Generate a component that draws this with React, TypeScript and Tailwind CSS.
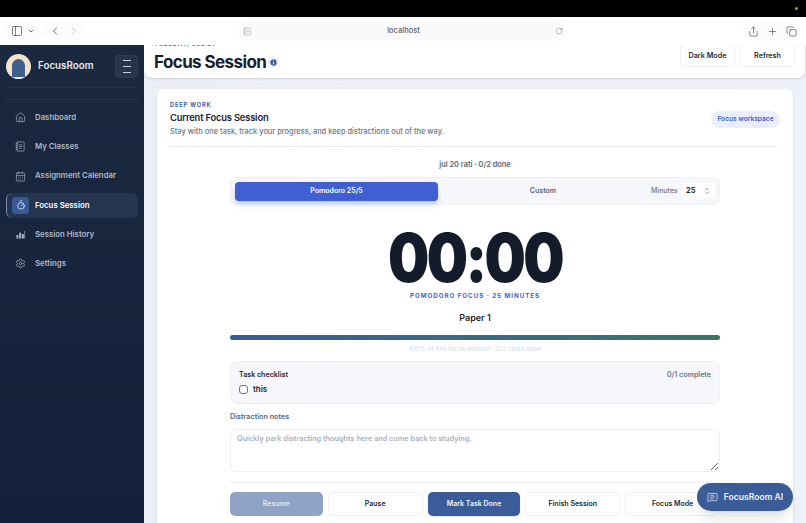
import {
  CalendarDays,
  ChevronDown,
  ChevronLeft,
  ChevronRight,
  ChevronsUpDown,
  Copy,
  House,
  Info,
  MessageSquareText,
  NotebookText,
  PanelLeft,
  Plus,
  RotateCw,
  Settings,
  Share,
  Timer,
} from 'lucide-react';

function HistoryIcon({ size, className }: { size: number; className?: string }) {
  return (
    <svg width={size} height={size} viewBox="0 0 24 24" fill="currentColor" className={className}>
      <rect x="3" y="13" width="4.5" height="8" />
      <rect x="9" y="8" width="4.5" height="13" />
      <rect x="15" y="11" width="4.5" height="10" />
      <rect x="20.5" y="4" width="1.5" height="17" />
    </svg>
  );
}

const NAV = [
  { label: 'Dashboard', icon: House },
  { label: 'My Classes', icon: NotebookText },
  { label: 'Assignment Calendar', icon: CalendarDays },
  { label: 'Focus Session', icon: Timer, active: true },
  { label: 'Session History', icon: HistoryIcon },
  { label: 'Settings', icon: Settings },
];

function BrowserBar() {
  return (
    <div className="h-[28px] shrink-0 flex items-center bg-white text-[#374151] relative">
      <div className="ml-[5px] w-[36px] h-[19px] rounded-full flex items-center justify-center gap-[4px] bg-[#fbfbfc]">
        <PanelLeft size={12} strokeWidth={1.3} />
        <ChevronDown size={8} strokeWidth={2.2} />
      </div>
      <div className="ml-[4px] w-[38px] h-[19px] rounded-full flex items-center justify-center gap-[7px] bg-[#fbfbfc]">
        <ChevronLeft size={12} strokeWidth={1.6} />
        <ChevronRight size={12} strokeWidth={1.6} className="text-[#b8bcc4]" />
      </div>
      <div className="ml-[155px] w-[328px] h-[19px] rounded-full bg-[#fafafb] flex items-center pl-[5px] pr-[3px] text-[7.5px] font-medium text-[#5b6270]">
        <NotebookText size={9} strokeWidth={1.3} className="text-[#9ca3af]" />
        <span className="flex-1 text-center">localhost</span>
        <RotateCw size={8} strokeWidth={1.3} className="text-[#6b7280]" />
      </div>
      <div className="ml-auto mr-[5px] w-[58px] h-[19px] rounded-full bg-[#fbfbfc] flex items-center justify-center gap-[8px]">
        <Share size={11} strokeWidth={1.3} />
        <Plus size={11} strokeWidth={1.3} />
        <Copy size={11} strokeWidth={1.3} />
      </div>
    </div>
  );
}

function Sidebar() {
  return (
    <aside className="w-[144px] shrink-0 bg-gradient-to-b from-[#1a2840] to-[#14213a] px-[6px]">
      <div className="h-[42px] flex items-center justify-between">
        <div className="flex items-center gap-[7px]">
          <div className="w-[25px] h-[25px] rounded-full bg-[#f3e3cc] flex items-end justify-center overflow-hidden">
            <div className="w-[13px] h-[20px] rounded-t-full bg-[#3f5f8c] border-b-2 border-[#e7edf5]" />
          </div>
          <span className="text-[9.8px] font-semibold text-[#e6ebf3]">FocusRoom</span>
        </div>
        <div className="w-[23px] h-[23px] rounded-[4px] bg-[#26344c] border border-[#2e3d56] flex flex-col items-center justify-center gap-[5px]">
          <span className="w-[8px] h-px bg-[#cbd5e1]" />
          <span className="w-[8px] h-px bg-[#cbd5e1]" />
          <span className="w-[8px] h-px bg-[#cbd5e1]" />
        </div>
      </div>
      <div className="h-px bg-[#22304a]" />
      <div className="h-px mt-[11px] bg-[#22304a]" />
      <nav className="mt-[5px] flex flex-col gap-[4.3px]">
        {NAV.map(item =>
          item.active ? (
            <div
              key={item.label}
              className="h-[25px] flex items-center gap-[6px] pl-[5px] rounded-[6px] bg-[#26354f] border-l border-[#7288ad] text-[7.8px] font-semibold text-white"
            >
              <span className="w-[17px] h-[17px] rounded-[4px] bg-[#365a96] flex items-center justify-center">
                <item.icon size={10} strokeWidth={1.7} />
              </span>
              {item.label}
            </div>
          ) : (
            <div
              key={item.label}
              className="h-[25px] flex items-center gap-[9px] pl-[9px] text-[7.8px] font-semibold text-[#aeb8c8]"
            >
              <item.icon size={11} strokeWidth={1.5} className="text-[#a3aec0]" />
              {item.label}
            </div>
          ),
        )}
      </nav>
    </aside>
  );
}

function ActionButton({ label, kind }: { label: string; kind?: 'muted' | 'primary' }) {
  const look =
    kind === 'muted'
      ? 'bg-[#90a3c5] text-[#dfe6f1]'
      : kind === 'primary'
        ? 'bg-[#3a5c99] text-[#eef2f8] shadow-sm'
        : 'bg-white border border-[#edf0f5] text-[#1f2937]';
  return (
    <button className={`flex-1 h-[24px] rounded-[5px] text-[7px] font-semibold ${look}`}>{label}</button>
  );
}

function MainCard() {
  return (
    <section className="mt-[11px] ml-[13px] mr-[13px] rounded-t-[7px] bg-white px-[13px] pt-[12px] h-[440px] shadow-sm">
      <div className="h-[46px] flex justify-between border-b border-[#e8ebf0]">
        <div>
          <div className="text-[5.6px] leading-[8px] font-bold tracking-[0.16em] text-[#3a5c99]">DEEP WORK</div>
          <div className="mt-[1.5px] text-[9.4px] leading-[13px] font-semibold tracking-[-0.02em] text-[#1b2333]">
            Current Focus Session
          </div>
          <div className="mt-[2px] text-[7.45px] leading-[11px] font-medium text-[#6b7588]">
            Stay with one task, track your progress, and keep distractions out of the way.
          </div>
        </div>
        <span className="mt-[10px] h-[17px] w-[69px] rounded-full bg-[#eaeefa] text-[#3f5fc4] text-[6.6px] font-semibold flex items-center justify-center">
          Focus workspace
        </span>
      </div>

      <div className="w-[490px] ml-[60px]">
        <div className="mt-[12px] h-[11px] leading-[11px] text-center text-[7.4px] font-semibold text-[#5c6678]">
          jul 20 rati · 0/2 done
        </div>
        <div className="mt-[7px] h-[28px] rounded-[6px] bg-[#f6f7fb] border border-[#eef0f6] flex items-center px-[4px]">
          <div className="w-[203px] h-[19px] rounded-[4px] bg-[#3f5fd2] text-white text-[7px] font-semibold flex items-center justify-center shadow-md shadow-[#3f5fd2]/25">
            Pomodoro 25/5
          </div>
          <div className="w-[210px] mr-[3px] text-center text-[7px] font-semibold text-[#5c6678]">Custom</div>
          <span className="w-[27px] text-[7px] font-medium text-[#6b7588]">Minutes</span>
          <div className="ml-[4px] w-[33px] h-[16px] rounded-[4px] bg-white flex items-center justify-between pl-[4px] pr-[4px] text-[7.4px] font-bold text-[#1f2937]">
            25
            <ChevronsUpDown size={8} strokeWidth={1.6} className="text-[#4b5563]" />
          </div>
        </div>
        <div className="mt-[20px] h-[64px] leading-[64px] text-center text-[68px] font-black tracking-[-0.045em] scale-x-[0.855] text-[#141b2b]">
          00:00
        </div>
        <div className="mt-[2px] h-[10px] leading-[10px] text-center text-[6.2px] font-bold tracking-[0.16em] text-[#3f5fc4]">
          POMODORO FOCUS · 25 MINUTES
        </div>
        <div className="mt-[9.5px] h-[13px] leading-[13px] text-center text-[9px] font-semibold text-[#1f2533]">Paper 1</div>
        <div className="mt-[11.5px] h-[5px] rounded-full bg-gradient-to-r from-[#3a5c99] to-[#3e7465]" />
        <div className="mt-[5px] h-[8px] leading-[8px] text-center text-[6.4px] font-medium text-[#d6deea]">
          100% of this focus session · 0/2 tasks done
        </div>
        <div className="mt-[8px] h-[43px] rounded-[7px] bg-[#f6f7fb] border border-[#eef0f6] px-[8px] pt-[8px]">
          <div className="flex justify-between text-[7.1px] leading-[10px] font-semibold">
            <span className="text-[#1f2533]">Task checklist</span>
            <span className="text-[#6b7588]">0/1 complete</span>
          </div>
          <label className="mt-[4px] flex items-center gap-[5px] text-[8px] leading-[11px] font-semibold text-[#1f2533]">
            <span className="w-[9px] h-[9px] rounded-[3px] border border-[#6b7588] bg-white" />
            this
          </label>
        </div>
        <div className="mt-[8px] h-[10px] leading-[10px] text-[7.2px] font-semibold text-[#5c6678]">Distraction notes</div>
        <textarea
          readOnly
          placeholder="Quickly park distracting thoughts here and come back to studying."
          className="mt-[7px] block w-full h-[43px] rounded-[6px] border border-[#eceff4] bg-white px-[6px] py-[4px] text-[7.3px] font-semibold placeholder:text-[#a9b1c1] outline-none"
        />
        <div className="mt-[10px] pt-[9px] border-t border-[#eef0f5] flex gap-[5px]">
          <ActionButton label="Resume" kind="muted" />
          <ActionButton label="Pause" />
          <ActionButton label="Mark Task Done" kind="primary" />
          <ActionButton label="Finish Session" />
          <ActionButton label="Focus Mode" />
        </div>
      </div>
    </section>
  );
}

export default function App() {
  return (
    <div className="w-[806px] h-[523px] flex flex-col overflow-hidden bg-black font-['Inter',sans-serif]">
      <div className="h-[17px] shrink-0 flex items-center justify-end pr-[8px]">
        <span className="w-[3px] h-[3px] rounded-full bg-[#e08a2c]" />
      </div>
      <BrowserBar />
      <div className="flex-1 flex min-h-0">
        <Sidebar />
        <main className="flex-1 relative overflow-hidden bg-gradient-to-r from-[#eceff5] to-[#eef1f8]">
          <header className="-mt-[5px] h-[38px] mr-px rounded-b-[8px] bg-white pl-[10px] pr-[10px] flex justify-between shadow-sm">
            <div>
              <div className="text-[6px] leading-[8px] font-bold tracking-[0.12em] text-[#5c6678]">TUESDAY, JUL 21</div>
              <h1 className="mt-[2px] flex items-center text-[17px] leading-[24px] font-bold tracking-[-0.035em] text-[#171e2e]">
                Focus Session
                <span className="ml-px w-[12px] h-[12px] rounded-full bg-[#eef1f8] flex items-center justify-center">
                  <Info size={9} strokeWidth={2.5} className="text-white fill-[#3a5c99]" />
                </span>
              </h1>
            </div>
            <div className="flex gap-[5px]">
              <button className="w-[55px] h-[27px] pt-[5px] rounded-b-[5px] bg-white border border-[#eef0f5] text-[7.2px] font-semibold text-[#1f2937]">
                Dark Mode
              </button>
              <button className="w-[55px] h-[27px] pt-[5px] rounded-b-[5px] bg-white border border-[#eef0f5] text-[7.2px] font-semibold text-[#1f2937]">
                Refresh
              </button>
            </div>
          </header>
          <MainCard />
          <button className="absolute left-[553px] top-[438px] w-[96px] h-[28px] rounded-full bg-[#3a5c99] text-[#eef2f8] text-[8.6px] font-semibold flex items-center justify-center gap-[6px] shadow-lg">
            <MessageSquareText size={11} strokeWidth={1.5} />
            FocusRoom AI
          </button>
        </main>
      </div>
    </div>
  );
}
